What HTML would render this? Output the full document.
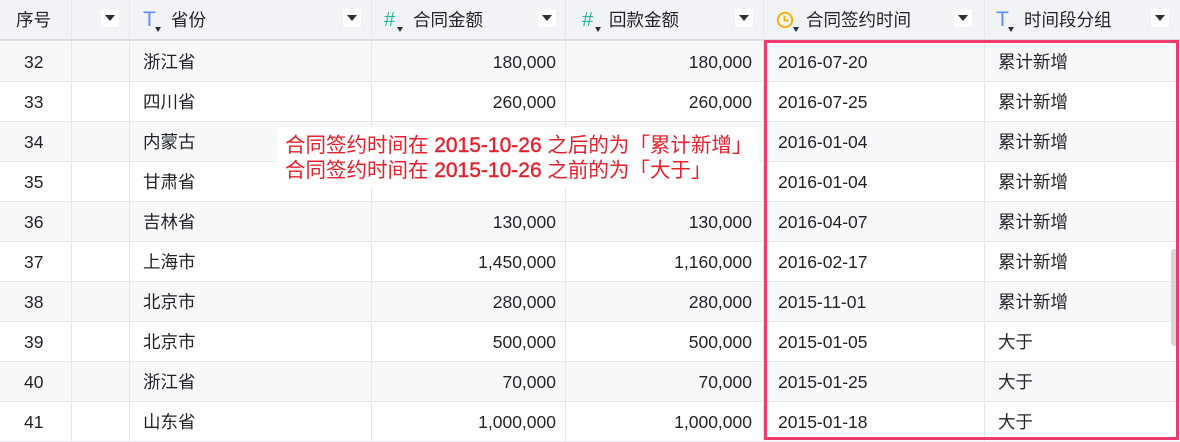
<!DOCTYPE html>
<html><head><meta charset="utf-8"><style>
*{margin:0;padding:0;box-sizing:border-box}
body{width:1180px;height:442px;overflow:hidden;background:#fff;font-family:"Liberation Sans","Noto Sans CJK SC",sans-serif;color:#1f2329;font-size:17.5px;position:relative}
.c{position:absolute;top:0;height:100%;border-right:1px solid #e6e7eb}
.hdr{position:absolute;left:0;top:0;width:1180px;height:41px;background:#f2f3f7;border-bottom:2px solid #dcdde2}
.row{position:absolute;left:0;width:1180px;height:40px;border-bottom:1px solid #e6e7eb}
.g{background:#f7f8fa}
.t{position:absolute;line-height:40px;white-space:nowrap}
.h{position:absolute;top:0;line-height:40px;white-space:nowrap;font-size:17.5px}
.dd{position:absolute;top:9px;width:18px;height:18px;background:#fff;border-radius:2px}
.dd:after{content:"";position:absolute;left:4px;top:6px;border-left:5px solid transparent;border-right:5px solid transparent;border-top:6px solid #2b2f36}
.ic{position:absolute;top:0;line-height:40px;font-size:20px}
.sm{position:absolute;top:27px;border-left:3.5px solid transparent;border-right:3.5px solid transparent;border-top:5px solid #2b2f36}
</style></head><body>
<div class="hdr"></div>
<div class="row g" style="top:42px"></div>
<div class="row" style="top:82px"></div>
<div class="row g" style="top:122px"></div>
<div class="row" style="top:162px"></div>
<div class="row g" style="top:202px"></div>
<div class="row" style="top:242px"></div>
<div class="row g" style="top:282px"></div>
<div class="row" style="top:322px"></div>
<div class="row g" style="top:362px"></div>
<div class="row" style="top:402px"></div>
<div class="c" style="left:0;width:72px"></div>
<div class="c" style="left:72px;width:58px"></div>
<div class="c" style="left:130px;width:242px"></div>
<div class="c" style="left:372px;width:194px"></div>
<div class="c" style="left:566px;width:198px"></div>
<div class="c" style="left:764px;width:221px"></div>

<div class="h" style="left:16px">序号</div><div class="dd" style="left:101px"></div>
<div class="ic" style="left:143px;color:#5b8ff9;font-size:21px">T</div><div class="sm" style="left:155px"></div><div class="h" style="left:171px">省份</div><div class="dd" style="left:343px"></div>
<div class="ic" style="left:384px;color:#2bb5a0">#</div><div class="sm" style="left:397px"></div><div class="h" style="left:413px">合同金额</div><div class="dd" style="left:538px"></div>
<div class="ic" style="left:582px;color:#2bb5a0">#</div><div class="sm" style="left:595px"></div><div class="h" style="left:609px">回款金额</div><div class="dd" style="left:735px"></div>
<svg style="position:absolute;left:776px;top:11px" width="18" height="18" viewBox="0 0 18 18"><circle cx="9" cy="9" r="7.2" fill="none" stroke="#f5b400" stroke-width="2"/><path d="M8.5 4.8V9.5H12.5" fill="none" stroke="#f5b400" stroke-width="2"/></svg><div class="sm" style="left:793px"></div><div class="h" style="left:806px">合同签约时间</div><div class="dd" style="left:954px"></div>
<div class="ic" style="left:996px;color:#5b8ff9;font-size:21px">T</div><div class="sm" style="left:1008px"></div><div class="h" style="left:1024px">时间段分组</div><div class="dd" style="left:1151px"></div>

<div style="position:absolute;left:0;top:42px;width:1180px">
<div class="t" style="top:0;left:24px">32</div><div class="t" style="top:0;left:143px">浙江省</div><div class="t" style="top:0;right:624px">180,000</div><div class="t" style="top:0;right:428px">180,000</div><div class="t" style="top:0;left:778px">2016-07-20</div><div class="t" style="top:0;left:998px">累计新增</div>
<div class="t" style="top:40px;left:24px">33</div><div class="t" style="top:40px;left:143px">四川省</div><div class="t" style="top:40px;right:624px">260,000</div><div class="t" style="top:40px;right:428px">260,000</div><div class="t" style="top:40px;left:778px">2016-07-25</div><div class="t" style="top:40px;left:998px">累计新增</div>
<div class="t" style="top:80px;left:24px">34</div><div class="t" style="top:80px;left:143px">内蒙古</div><div class="t" style="top:80px;left:778px">2016-01-04</div><div class="t" style="top:80px;left:998px">累计新增</div>
<div class="t" style="top:120px;left:24px">35</div><div class="t" style="top:120px;left:143px">甘肃省</div><div class="t" style="top:120px;left:778px">2016-01-04</div><div class="t" style="top:120px;left:998px">累计新增</div>
<div class="t" style="top:160px;left:24px">36</div><div class="t" style="top:160px;left:143px">吉林省</div><div class="t" style="top:160px;right:624px">130,000</div><div class="t" style="top:160px;right:428px">130,000</div><div class="t" style="top:160px;left:778px">2016-04-07</div><div class="t" style="top:160px;left:998px">累计新增</div>
<div class="t" style="top:200px;left:24px">37</div><div class="t" style="top:200px;left:143px">上海市</div><div class="t" style="top:200px;right:624px">1,450,000</div><div class="t" style="top:200px;right:428px">1,160,000</div><div class="t" style="top:200px;left:778px">2016-02-17</div><div class="t" style="top:200px;left:998px">累计新增</div>
<div class="t" style="top:240px;left:24px">38</div><div class="t" style="top:240px;left:143px">北京市</div><div class="t" style="top:240px;right:624px">280,000</div><div class="t" style="top:240px;right:428px">280,000</div><div class="t" style="top:240px;left:778px">2015-11-01</div><div class="t" style="top:240px;left:998px">累计新增</div>
<div class="t" style="top:280px;left:24px">39</div><div class="t" style="top:280px;left:143px">北京市</div><div class="t" style="top:280px;right:624px">500,000</div><div class="t" style="top:280px;right:428px">500,000</div><div class="t" style="top:280px;left:778px">2015-01-05</div><div class="t" style="top:280px;left:998px">大于</div>
<div class="t" style="top:320px;left:24px">40</div><div class="t" style="top:320px;left:143px">浙江省</div><div class="t" style="top:320px;right:624px">70,000</div><div class="t" style="top:320px;right:428px">70,000</div><div class="t" style="top:320px;left:778px">2015-01-25</div><div class="t" style="top:320px;left:998px">大于</div>
<div class="t" style="top:360px;left:24px">41</div><div class="t" style="top:360px;left:143px">山东省</div><div class="t" style="top:360px;right:624px">1,000,000</div><div class="t" style="top:360px;right:428px">1,000,000</div><div class="t" style="top:360px;left:778px">2015-01-18</div><div class="t" style="top:360px;left:998px">大于</div>
</div>

<div style="position:absolute;left:277px;top:127px;width:482px;height:60px;background:#fff;border-radius:5px;padding:6px 0 0 8px;color:#e5212d;font-size:20.5px;line-height:25px;white-space:nowrap">合同签约时间在 <span style="font-size:21px;-webkit-text-stroke:0.4px #e5212d">2015-10-26</span> 之后的为「累计新增」<br>合同签约时间在 <span style="font-size:21px;-webkit-text-stroke:0.4px #e5212d">2015-10-26</span> 之前的为「大于」</div>

<div style="position:absolute;left:1171px;top:249px;width:7px;height:97px;background:#d5d6d9;border-radius:3px"></div>
<div style="position:absolute;left:764px;top:40px;width:415px;height:400px;border:3px solid #ee3a6d"></div>
</body></html>
